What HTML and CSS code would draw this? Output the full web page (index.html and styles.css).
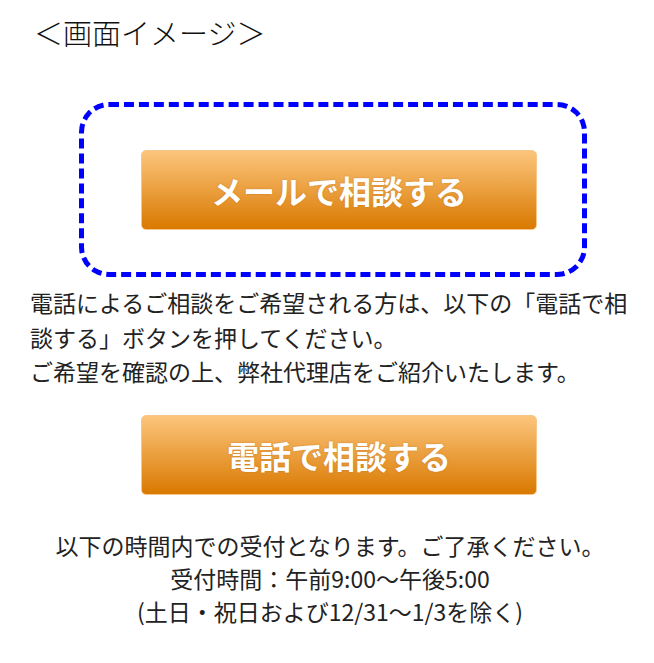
FILE: index.html
```html
<!DOCTYPE html>
<html lang="ja">
<head>
<meta charset="UTF-8" />
<meta name="viewport" content="width=device-width, initial-scale=1" />
<title>画面イメージ</title>
<link rel="stylesheet" href="styles.css">
</head>
<body>

<p class="caption">＜画面イメージ＞</p>

<div class="mailbox">
  <a class="orangebtn" href="#">メールで相談する</a>
</div>

<p class="guide">電話によるご相談をご希望される方は、以下の「電話で相談する」ボタンを押してください。<br>ご希望を確認の上、弊社代理店をご紹介いたします。</p>

<div class="telrow">
  <a class="orangebtn" href="#">電話で相談する</a>
</div>

<p class="hours">以下の時間内での受付となります。ご了承ください。<br>受付時間：午前9:00～午後5:00<br>(土日・祝日および12/31～1/3を除く)</p>

</body>
</html>
```

FILE: styles.css
```css
body {
  margin: 0;
  background-color: white;
  font-family: "Noto Sans CJK JP", "Noto Sans", sans-serif;
  color: #222;
}
.caption {
  margin: 0;
  padding: 16px 0 0 34px;
  font-size: 29px;
  line-height: 33px;
  font-weight: 300;
  color: #111;
}
.mailbox {
  box-sizing: border-box;
  width: 508px;
  height: 175px;
  margin: 53px 0 0 79px;
  padding: 43px 0 0 57px;
  border: 5px dashed #0000ff;
  border-radius: 30px;
}
.orangebtn {
  box-sizing: border-box;
  display: flex;
  justify-content: center;
  align-items: center;
  width: 396px;
  height: 80px;
  border: 1px solid #f5c88a;
  border-radius: 5px;
  background: linear-gradient(#fcc57c, #d97900);
  color: white;
  font-size: 32px;
  font-weight: bold;
  text-decoration: none;
  text-shadow: 0 0 2px rgba(150, 80, 0, 0.4);
}
.guide {
  width: 610px;
  margin: 8px 0 0 30px;
  font-size: 23px;
  line-height: 34.5px;
}
.telrow {
  margin: 26px 0 0 141px;
}
.hours {
  margin: 34px 0 0 0;
  padding-left: 6px;
  text-align: center;
  font-size: 23px;
  line-height: 33px;
}
```
